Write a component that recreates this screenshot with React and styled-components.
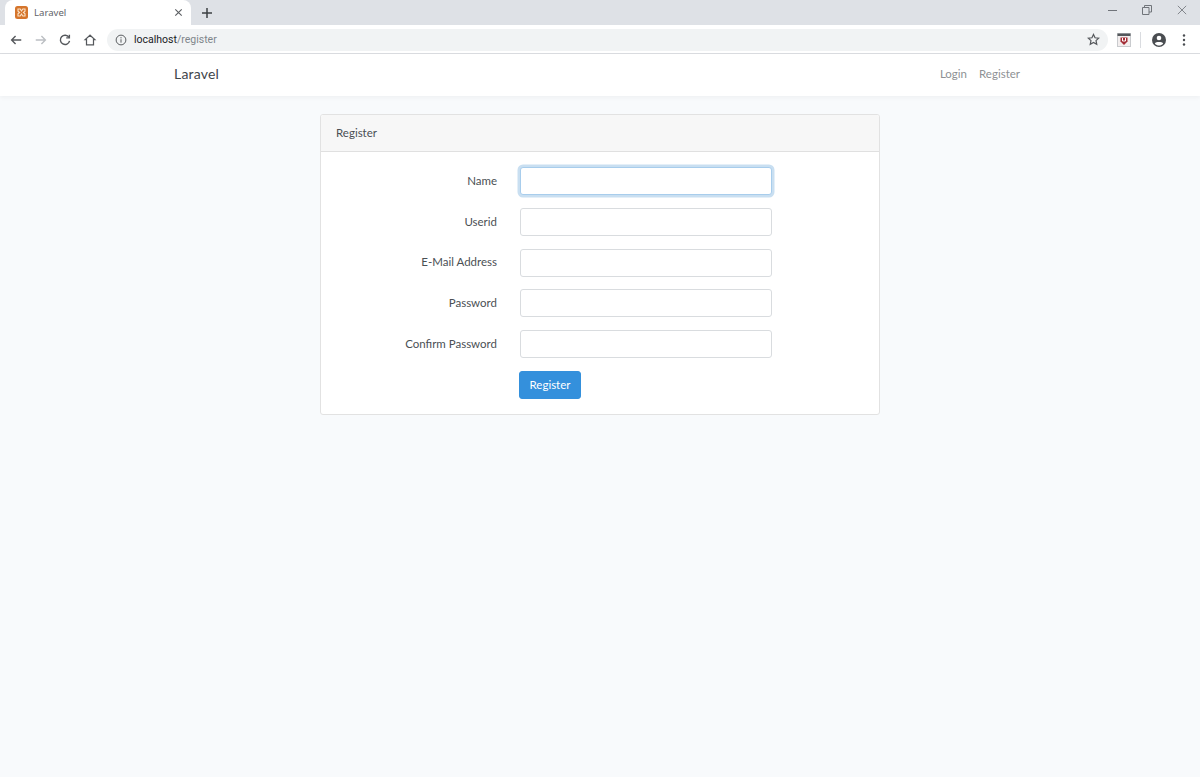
import React from "react";
import styled, { createGlobalStyle } from "styled-components";

const Global = createGlobalStyle`
  html, body { margin: 0; padding: 0; height: 100%; }
  body { background: #f8fafc; font-family: Lato, "Noto Sans", sans-serif; color: #212529; }
  * { box-sizing: border-box; }
`;
const Page = styled.div`width: 1200px; height: 777px; overflow: hidden; background: #f8fafc;`;
const TabStrip = styled.div`height: 25px; background: #dee1e6; display: flex; align-items: stretch; padding-left: 5px;`;
const Tab = styled.div`
  width: 186px; background: #fff; border-radius: 8px 8px 0 0; display: flex; align-items: center;
  padding: 0 7px 0 10px; font-size: 9.6px; color: #5f6368; gap: 6px; font-family: "Noto Sans", sans-serif;
`;
const TabTitle = styled.span`flex: 1;`;
const NewTab = styled.div`width: 34px; display: flex; align-items: center; justify-content: center; margin-left: -1px;`;
const Spacer = styled.div`flex: 1;`;
const WindowControls = styled.div`display: flex; align-items: center; height: 20px; padding-right: 13px; gap: 25px;`;
const Toolbar = styled.div`
  height: 29px; background: #fff; border-bottom: 1px solid #dadce0; display: flex; align-items: center; padding: 1px 10px 0 9px;
`;
const NavIcons = styled.div`display: flex; align-items: center; gap: 10.67px; margin-right: 10px;`;
const Omnibox = styled.div`
  width: 1001px; height: 22px; border-radius: 11px; background: #f1f3f4; display: flex; align-items: center;
  padding: 0 8px 0 8px; font-family: Roboto, sans-serif; font-size: 10.5px; gap: 7px;
`;
const Host = styled.span`color: #202124;`;
const UrlPath = styled.span`color: #80868b;`;
const ToolbarEnd = styled.div`display: flex; align-items: center; margin-left: 9px; flex: 1;`;
const Divider = styled.div`width: 1px; height: 16px; background: #dadce0; margin: 0 10px 0 9px;`;
const MenuDots = styled.svg`margin-left: 15px;`;
const Navbar = styled.nav`
  height: 42px; background: #fff; box-shadow: 0 2px 4px rgba(0,0,0,.04); display: flex; align-items: center;
  justify-content: space-between; width: 100%; padding: 0 180px 3px 174px;
`;
const Brand = styled.a`font-size: 14px; color: #3f454b; letter-spacing: .2px;`;
const NavLinks = styled.div`display: flex; gap: 12px;`;
const NavLink = styled.a`font-size: 11.5px; color: #8e9194;`;
const Main = styled.main`padding-top: 18px; display: flex; justify-content: center;`;
const Card = styled.section`
  width: 560px; height: 301px; background: #fff; border: 1px solid #e2e2e2; border-radius: 3px; overflow: hidden;
`;
const CardHeader = styled.header`
  height: 37px; background: #f7f7f7; border-bottom: 1px solid #e0e0e0; padding: 0 15px 2px; display: flex; align-items: center;
  font-size: 11.5px; color: #4a4f54;
`;
const CardBody = styled.form`padding: 15px 0 0 0;`;
const Row = styled.div`display: flex; align-items: center; height: 28px; margin-bottom: 12.8px;`;
const Label = styled.label`width: 176px; text-align: right; font-size: 11.5px; color: #4a4f54; margin-right: 22.5px; padding-bottom: 1.5px;`;
const Input = styled.input`
  width: 252.5px; height: 28px; border: 1px solid #d9dcdf; border-radius: 3px; background: #fff; outline: none;
  ${p => p.$focus ? "border-color: #a8cdec; box-shadow: 0 0 0 2.5px #c9dff1;" : ""}
`;
const Button = styled.button`
  width: 62px; height: 28px; margin-left: 198px; border: 1px solid #3490dc; border-radius: 3px; background: #3490dc;
  color: #fff; font: 11.5px Lato, "Noto Sans", sans-serif; padding: 0 0 1px;
`;

const Svg = ({ s = 14, c = "#5f6368", w = 1.6, children }) => (
  <svg width={s} height={s} viewBox="0 0 16 16" fill="none" stroke={c} strokeWidth={w}>{children}</svg>
);
const Favicon = () => (
  <svg width="13" height="13" viewBox="0 0 13 13">
    <rect width="13" height="13" rx="2.5" fill="#d5752c" />
    <path d="M3 3h2.2l1.3 2 1.3-2H10v2.2L8.4 6.5 10 7.8V10H7.8L6.5 8 5.2 10H3V7.8l1.6-1.3L3 5.2z" fill="none" stroke="#fbe3c8" strokeWidth="1.1" />
  </svg>
);
const Field = ({ label, focus }) => (
  <Row>
    <Label>{label}</Label>
    <Input $focus={focus} />
  </Row>
);

export default function App() {
  return (
    <Page>
      <Global />
      <TabStrip>
        <Tab>
          <Favicon />
          <TabTitle>Laravel</TabTitle>
          <svg width="11" height="11" viewBox="0 0 12 12" stroke="#5a5d61" strokeWidth="1.2"><path d="M2.5 2.5l7 7M9.5 2.5l-7 7" /></svg>
        </Tab>
        <NewTab>
          <svg width="12" height="12" viewBox="0 0 12 12" stroke="#3c4043" strokeWidth="1.5"><path d="M6 1v10M1 6h10" /></svg>
        </NewTab>
        <Spacer />
        <WindowControls>
          <svg width="9" height="10" viewBox="0 0 9 10" stroke="#70747a"><path d="M0 5.5h9" /></svg>
          <svg width="10" height="10" viewBox="0 0 10 10" fill="none" stroke="#70747a"><path d="M.5 2.5h6.5v7H.5zM2.5 2.5V.5h7v6.5H7" /></svg>
          <svg width="10" height="10" viewBox="0 0 12 12" stroke="#70747a"><path d="M1 1l10 10M11 1L1 11" /></svg>
        </WindowControls>
      </TabStrip>
      <Toolbar>
        <NavIcons>
          <Svg c="#55585c"><path d="M14 8H3M7.5 3.5L3 8l4.5 4.5" /></Svg>
          <Svg c="#bcbfc3"><path d="M2 8h11M8.5 3.5L13 8l-4.5 4.5" /></Svg>
          <Svg c="#55585c"><path d="M12.5 5A5.3 5.3 0 1 0 13.2 9" /><path d="M13 2v3.6H9.4" /></Svg>
          <Svg c="#55585c" w={1.4}><path d="M8 2.5L2.5 7.5H4v6h8v-6h1.5z" /></Svg>
        </NavIcons>
        <Omnibox>
          <Svg s={12} c="#55585c" w={1.3}><circle cx="8" cy="8" r="6.5" /><path d="M8 7v4.5M8 4.2v1.6" /></Svg>
          <span><Host>localhost</Host><UrlPath>/register</UrlPath></span>
          <Spacer />
          <svg width="13" height="13" viewBox="0 0 16 16" fill="none" stroke="#55585c" strokeWidth="1.5"><path d="M8 1.8l1.9 4.1 4.5.5-3.3 3 .9 4.4L8 11.6l-4 2.2.9-4.4-3.3-3 4.5-.5z" /></svg>
        </Omnibox>
        <ToolbarEnd>
          <svg width="14" height="14" viewBox="0 0 14 14">
            <rect x=".5" y=".5" width="13" height="13" fill="#f3eeee" stroke="#c9cbce" />
            <rect x=".5" y=".5" width="13" height="2.5" fill="#54585c" />
            <path d="M3.5 4.5h7v4L7 12 3.5 8.5z" fill="#a32b34" />
            <path d="M5.5 5v3h3V5" fill="none" stroke="#fff" />
          </svg>
          <Divider />
          <svg width="16" height="16" viewBox="0 0 16 16">
            <circle cx="8" cy="8" r="7" fill="#4a4d51" />
            <circle cx="8" cy="6" r="2.3" fill="#fff" />
            <path d="M3.8 11.5C5 9.6 11 9.6 12.2 11.5 11 13 9.5 13.5 8 13.5S5 13 3.8 11.5z" fill="#fff" />
          </svg>
          <MenuDots width="4" height="14" viewBox="0 0 4 14" fill="#4a4d51">
            <circle cx="2" cy="2.5" r="1.2" /><circle cx="2" cy="7" r="1.2" /><circle cx="2" cy="11.5" r="1.2" />
          </MenuDots>
        </ToolbarEnd>
      </Toolbar>
      <Navbar>
        <Brand>Laravel</Brand>
        <NavLinks>
          <NavLink>Login</NavLink>
          <NavLink>Register</NavLink>
        </NavLinks>
      </Navbar>
      <Main>
        <Card>
          <CardHeader>Register</CardHeader>
          <CardBody>
            <Field label="Name" focus />
            <Field label="Userid" />
            <Field label="E-Mail Address" />
            <Field label="Password" />
            <Field label="Confirm Password" />
            <Button type="button">Register</Button>
          </CardBody>
        </Card>
      </Main>
    </Page>
  );
}
